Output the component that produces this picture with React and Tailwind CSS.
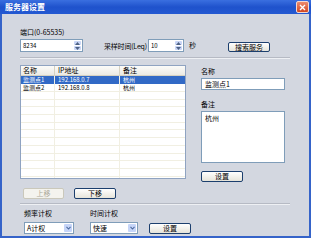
import React from 'react'

const font = { fontFamily: '"Noto Sans CJK SC", "Noto Sans", sans-serif' }

function Spinner() {
  return (
    <div className="flex w-[9px] flex-col gap-[1px] p-[1px]">
      <div className="flex flex-1 items-center justify-center rounded-[1px] bg-[#c9d6f6]">
        <svg width="5" height="3" viewBox="0 0 5 3"><path d="M0 3 L2.5 0 L5 3 Z" fill="#4d6185" /></svg>
      </div>
      <div className="flex flex-1 items-center justify-center rounded-[1px] bg-[#c9d6f6]">
        <svg width="5" height="3" viewBox="0 0 5 3"><path d="M0 0 L2.5 3 L5 0 Z" fill="#4d6185" /></svg>
      </div>
    </div>
  )
}

function SpinBox({ className, value }) {
  return (
    <div className={'flex h-[13px] border border-[#7f9db9] bg-white ' + className}>
      <div className="flex-1 pl-[2px] text-[6px] leading-[11px] text-black">{value}</div>
      <Spinner />
    </div>
  )
}

function Select({ className, value }) {
  return (
    <div className={'flex h-[12px] border border-[#7f9db9] bg-white ' + className}>
      <div className="flex-1 pl-[2px] text-[7px] leading-[10px] text-black">{value}</div>
      <div className="m-[1px] flex w-[8px] items-center justify-center rounded-[1px] bg-[#c6d5f8]">
        <svg width="5" height="4" viewBox="0 0 5 4"><path d="M0.5 0.8 L2.5 3 L4.5 0.8" stroke="#4d6a9e" strokeWidth="1.1" fill="none" /></svg>
      </div>
    </div>
  )
}

function Button({ className, children, disabled }) {
  if (disabled) {
    return (
      <div className={'flex items-center justify-center rounded-[2px] border border-[#cac8bb] bg-[#f4f3ee] text-[7px] text-[#aca899] ' + className}>
        {children}
      </div>
    )
  }
  return (
    <div className={'flex items-center justify-center rounded-[2px] border border-[#1c3f6e] bg-gradient-to-b from-[#ffffff] to-[#e6e4da] text-[7px] text-black ' + className}>
      {children}
    </div>
  )
}

function Separator() {
  return (
    <div className="w-[270px]">
      <div className="h-[1px] bg-[#b6bac4]" />
      <div className="h-[1px] bg-[#eef0f4]" />
    </div>
  )
}

const rows = [
  { name: '监测点1', ip: '192.168.0.7', note: '杭州', sel: true },
  { name: '监测点2', ip: '192.168.0.8', note: '杭州' },
]

export default function App() {
  const empty = Array.from({ length: 12 })
  return (
    <div className="h-[243px] w-[315px] bg-white" style={font}>
      <div className="flex h-[238px] w-[311px] flex-col border-x-2 border-b-2 border-[#3563c9] bg-[#d3d7e0]">
        {/* title bar */}
        <div className="-mx-[2px] flex h-[14px] items-center justify-between bg-gradient-to-b from-[#3a6fe0] via-[#1f52cc] to-[#2359d2] pl-[5px] pr-[2px]">
          <span className="text-[8px] font-bold leading-[8px] text-white">服务器设置</span>
          <div className="flex h-[12px] w-[13px] items-center justify-center rounded-[2px] border border-[#f4d8cf] bg-gradient-to-b from-[#ec8a6c] to-[#d2461f]">
            <svg width="7" height="7" viewBox="0 0 7 7"><path d="M1 1 L6 6 M6 1 L1 6" stroke="#ffffff" strokeWidth="1.4" /></svg>
          </div>
        </div>

        <div className="flex flex-col pl-[18px]">
          <div className="mt-[15px] h-[7px] text-[7px] leading-[7px] text-black">端口(0-65535)</div>

          <div className="mt-[3px] flex items-end">
            <SpinBox className="w-[63px]" value="8234" />
            <span className="mb-[2px] ml-[21px] w-[44px] whitespace-nowrap text-[7px] leading-[7px] tracking-[-0.2px] text-black">采样时间(Leq)</span>
            <SpinBox className="w-[36px]" value="10" />
            <span className="mb-[3px] ml-[5px] text-[7px] leading-[7px] text-black">秒</span>
            <Button className="ml-[32px] h-[10px] w-[42px]">搜索服务</Button>
          </div>

          <div className="mt-[5px]">
            <Separator />
          </div>

          <div className="mt-[6px] flex">
            {/* table */}
            <div className="h-[114px] w-[166px] overflow-hidden border border-[#8fa3c1] bg-white">
              <div className="flex h-[10px] border-b border-[#d6d2c2] bg-gradient-to-b from-[#fbfbf9] to-[#ebeae4] text-[7px] leading-[9px] text-black">
                <div className="w-[34px] border-r border-[#d6d2c2] pl-[2px]">名称</div>
                <div className="w-[65px] border-r border-[#d6d2c2] pl-[3px]">IP地址</div>
                <div className="flex-1 pl-[3px]">备注</div>
              </div>
              {rows.map((r) => (
                <div
                  key={r.name}
                  className={
                    r.sel
                      ? 'flex h-[8px] bg-[#3169c6] text-[6px] leading-[8px] text-white'
                      : 'flex h-[8px] border-b border-[#f1efe2] text-[6px] leading-[7px] text-black'
                  }
                >
                  <div className="w-[34px] border-r border-[#f1efe2] pl-[2px]">{r.name}</div>
                  <div className="w-[65px] border-r border-[#f1efe2] pl-[3px]">{r.ip}</div>
                  <div className="flex-1 pl-[3px]">{r.note}</div>
                </div>
              ))}
              {empty.map((_, i) => (
                <div key={i} className="flex h-[7.7px] border-b border-[#f1efe2]">
                  <div className="w-[34px] border-r border-[#f1efe2]" />
                  <div className="w-[65px] border-r border-[#f1efe2]" />
                  <div className="flex-1" />
                </div>
              ))}
            </div>

            {/* right panel */}
            <div className="ml-[15px] mt-[3px] flex w-[84px] flex-col">
              <div className="h-[7px] text-[7px] leading-[7px] text-black">名称</div>
              <div className="mt-[3px] h-[12px] border border-[#7f9db9] bg-white pl-[3px] text-[7px] leading-[10px] text-black">监测点1</div>
              <div className="mt-[11px] h-[7px] text-[7px] leading-[7px] text-black">备注</div>
              <div className="mt-[3px] h-[52px] border border-[#7f9db9] bg-white pl-[3px] pt-[3px] text-[7px] leading-[7px] text-black">杭州</div>
              <Button className="mt-[8px] h-[11px] w-[42px]">设置</Button>
            </div>
          </div>

          <div className="mt-[6px] flex">
            <Button disabled className="ml-[3px] h-[11px] w-[41px]">上移</Button>
            <Button className="ml-[10px] h-[11px] w-[42px]">下移</Button>
          </div>

          <div className="mt-[4px]">
            <Separator />
          </div>

          <div className="mt-[5px] flex text-[7px] leading-[7px] text-black">
            <span className="ml-[4px] w-[66px]">频率计权</span>
            <span>时间计权</span>
          </div>

          <div className="mt-[5px] flex items-center">
            <Select className="ml-[4px] w-[50px]" value="A计权" />
            <Select className="ml-[16px] w-[48px]" value="快速" />
            <Button className="ml-[11px] h-[11px] w-[42px]">设置</Button>
          </div>
        </div>
      </div>
    </div>
  )
}
